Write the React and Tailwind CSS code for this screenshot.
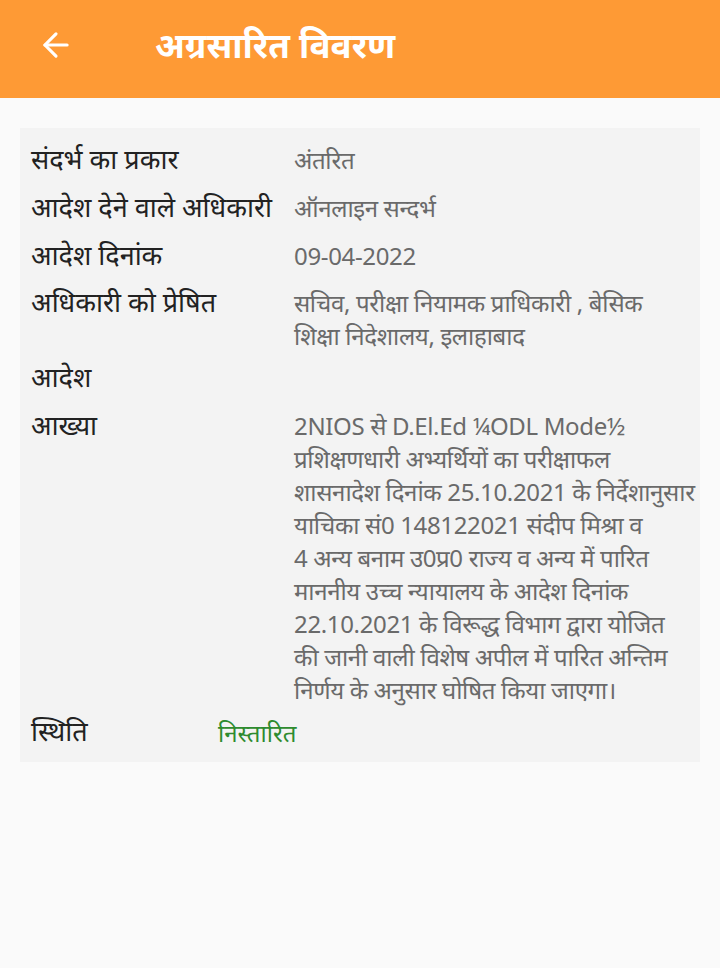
import { ArrowLeft } from 'lucide-react'

const rows = [
  { label: 'संदर्भ का प्रकार', lines: ['अंतरित'], gap: 'pb-[12px]' },
  { label: 'आदेश देने वाले अधिकारी', lines: ['ऑनलाइन सन्दर्भ'], gap: 'pb-[12px]' },
  { label: 'आदेश दिनांक', lines: ['09-04-2022'], gap: 'pb-[11px]' },
  { label: 'अधिकारी को प्रेषित', lines: ['सचिव, परीक्षा नियामक प्राधिकारी , बेसिक', 'शिक्षा निदेशालय, इलाहाबाद'], gap: 'pb-[7px]' },
  { label: 'आदेश', lines: [], gap: 'pb-[12px]' },
  {
    label: 'आख्या',
    lines: [
      '2NIOS से D.El.Ed ¼ODL Mode½',
      'प्रशिक्षणधारी अभ्यर्थियों का परीक्षाफल',
      'शासनादेश दिनांक 25.10.2021 के निर्देशानुसार',
      'याचिका सं0 148122021 संदीप मिश्रा व',
      '4 अन्य बनाम उ0प्र0 राज्य व अन्य में पारित',
      'माननीय उच्च न्यायालय के आदेश दिनांक',
      '22.10.2021 के विरूद्ध विभाग द्वारा योजित',
      'की जानी वाली विशेष अपील में पारित अन्तिम',
      'निर्णय के अनुसार घोषित किया जाएगा।',
    ],
    gap: 'pb-[7px]',
  },
]

export default function App() {
  return (
    <div className="min-h-[968px] bg-[#fafafa] font-['Noto_Sans','Roboto',sans-serif]">
      <header className="flex h-[98px] items-center bg-[#fe9a35] pb-[8px]">
        <button className="ml-[34px] flex h-11 w-11 items-center justify-center text-white">
          <ArrowLeft size={38} strokeWidth={2} />
        </button>
        <h1 className="ml-[77px] text-[35px] font-bold text-white">अग्रसारित विवरण</h1>
      </header>

      <div className="mx-[20px] mt-[30px] bg-[#f3f3f3] pb-[11px] pl-[11px] pr-[8px] pt-[13px]">
        {rows.map((row) => (
          <div key={row.label} className={`flex ${row.gap}`}>
            <div className="w-[263px] shrink-0 whitespace-nowrap text-[27px] leading-[36px] text-[#222]">{row.label}</div>
            <div className="flex-1 pt-[2px] text-[24px] leading-[33px] tracking-[-0.35px] text-[#6a6a6a]">
              {row.lines.map((line) => (
                <div key={line} className="whitespace-nowrap">{line}</div>
              ))}
            </div>
          </div>
        ))}
        <div className="flex">
          <div className="w-[187px] shrink-0 text-[27px] leading-[36px] text-[#222]">स्थिति</div>
          <div className="pt-[2px] text-[24px] leading-[36px] text-[#2e8b2e]">निस्तारित</div>
        </div>
      </div>
    </div>
  )
}
